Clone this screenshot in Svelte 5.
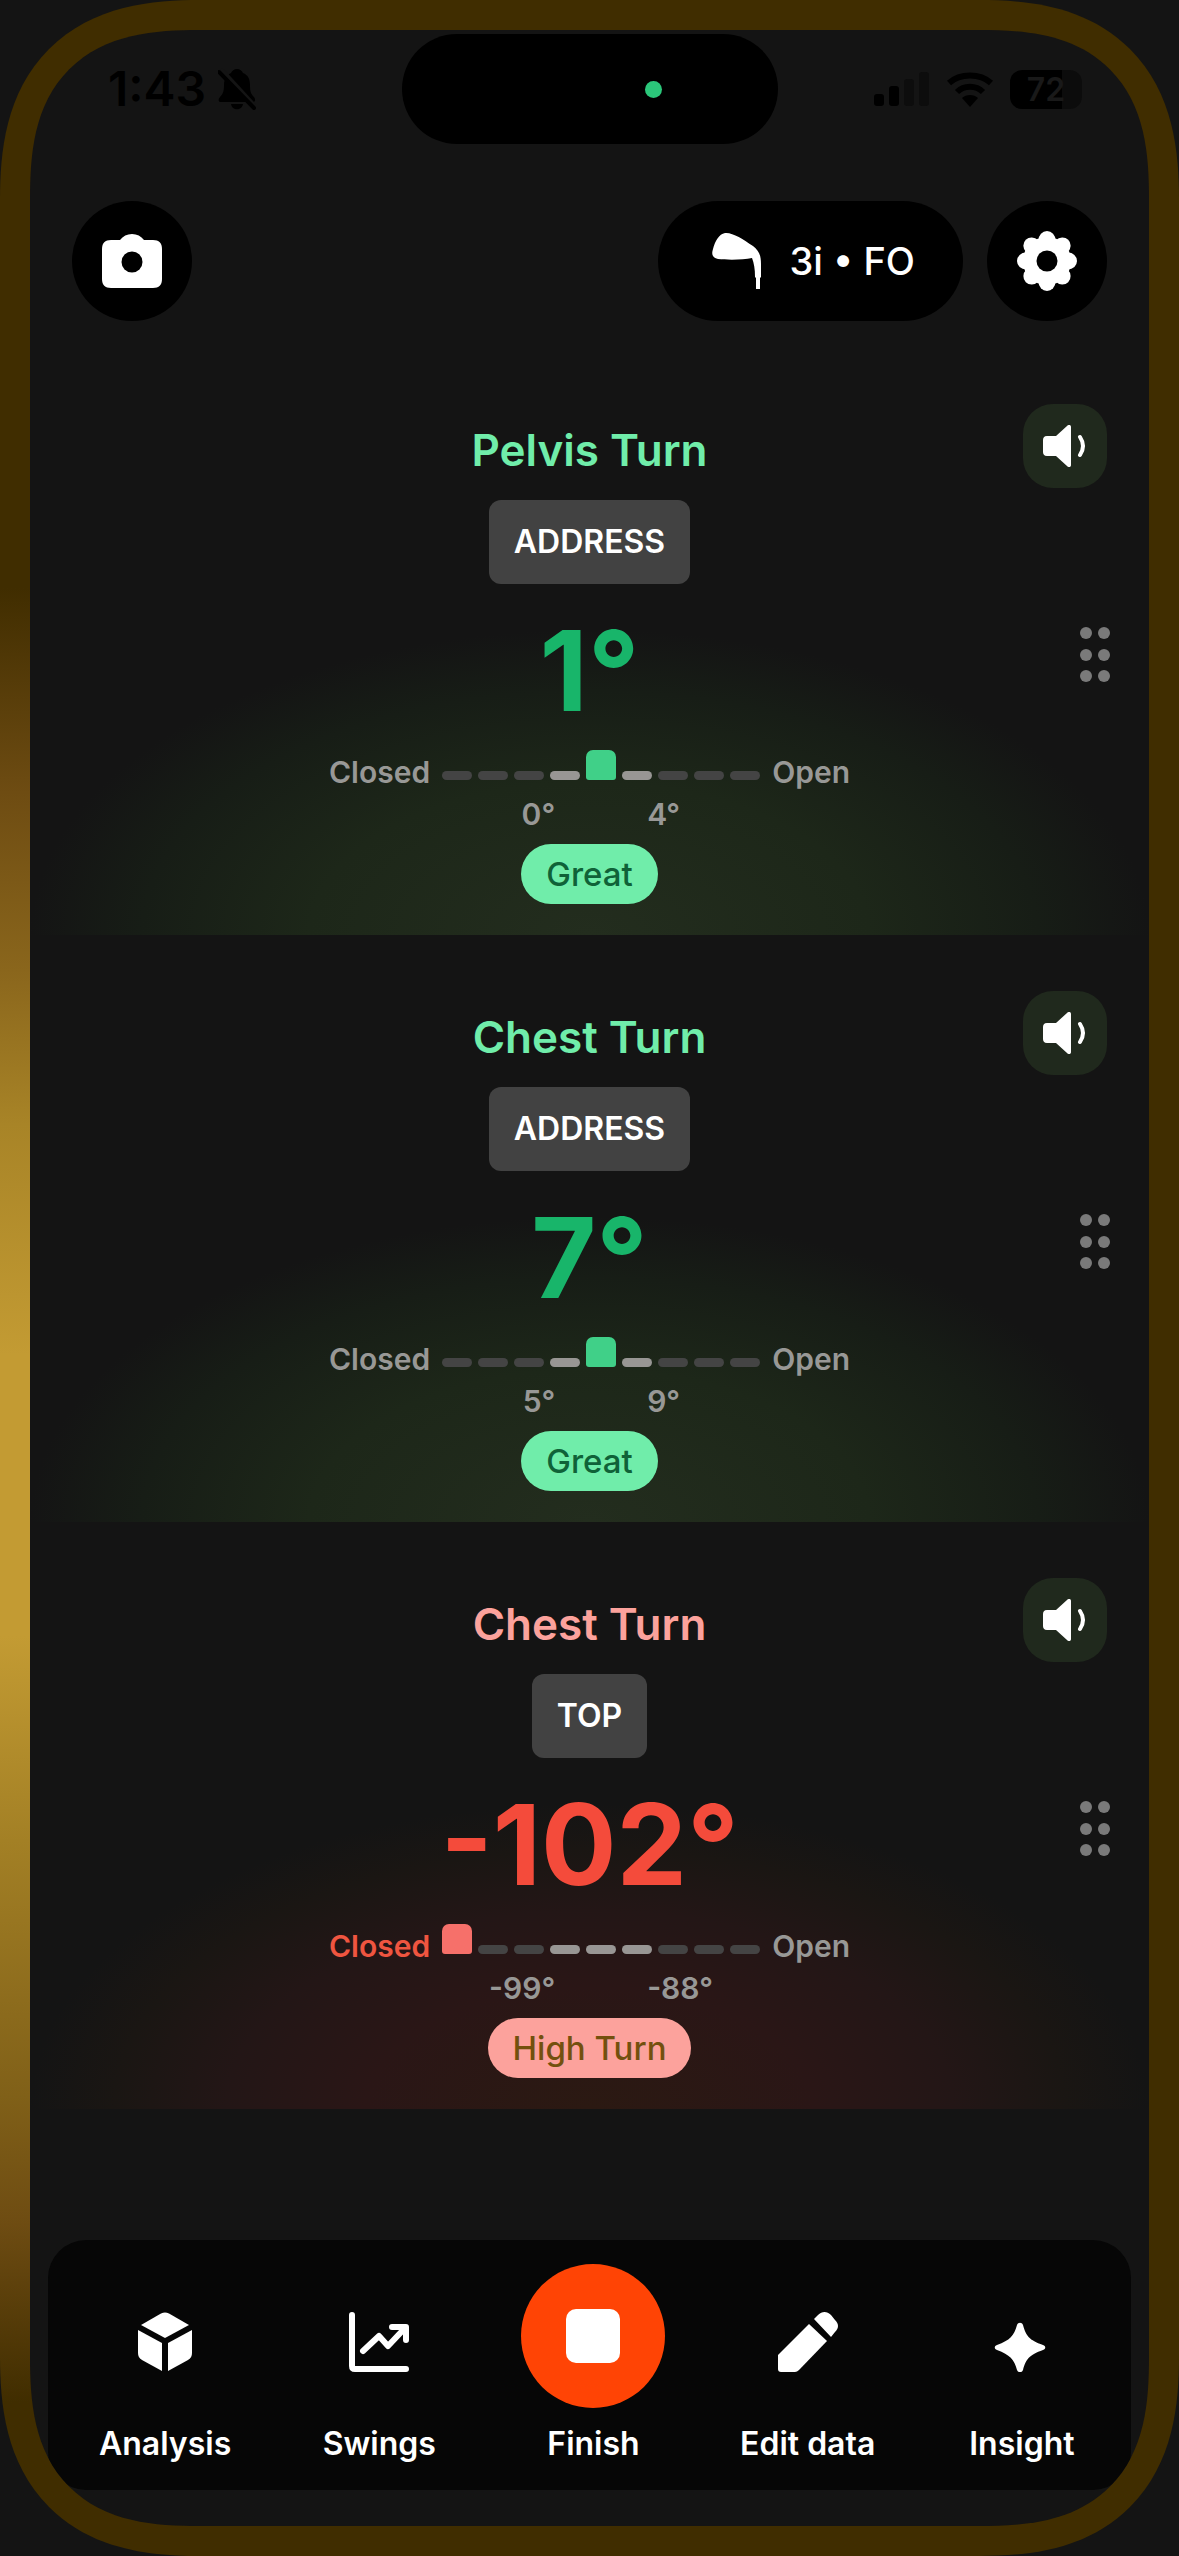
<script lang="ts">
    type Metric = {
        name: string;
        phase: string;
        value: number;
        low: number;
        high: number;
        marker: number;
        target: number[];
        verdict: string;
        tone: "good" | "bad";
    };

    const metrics: Metric[] = [
        {
            name: "Pelvis Turn",
            phase: "ADDRESS",
            value: 1,
            low: 0,
            high: 4,
            marker: 4,
            target: [3, 4, 5],
            verdict: "Great",
            tone: "good",
        },
        {
            name: "Chest Turn",
            phase: "ADDRESS",
            value: 7,
            low: 5,
            high: 9,
            marker: 4,
            target: [3, 4, 5],
            verdict: "Great",
            tone: "good",
        },
        {
            name: "Chest Turn",
            phase: "TOP",
            value: -102,
            low: -99,
            high: -88,
            marker: 0,
            target: [3, 4, 5],
            verdict: "High Turn",
            tone: "bad",
        },
    ];

    const segments = Array.from({ length: 9 }, (_, i) => i);
    const petals = segments.slice(0, 8).map((i) => i * 45);
</script>

<div class="frame">
    <div class="screen">
        <div class="status">
            <div class="status-left">
                <span class="time">1:43</span>
                <svg width="38" height="42" viewBox="0 0 38 42" aria-hidden="true">
                    <path
                        d="M19 1c3 0 5 2 6 4 5 2 7 6 7 12 0 7 1 9 4 12 2 3 1 5-1 5H3c-3 0-3-3-1-5 3-3 4-6 4-12C6 11 9 7 13 5c1-2 3-4 6-4zM13 36h12c-1 7-11 7-12 0z"
                    />
                    <path class="slash-gap" d="M3 1l34 37" />
                    <path class="slash" d="M1 4l35 36" />
                </svg>
            </div>
            <div class="island"><span class="camera-dot"></span></div>
            <div class="status-right">
                <svg width="56" height="34" viewBox="0 0 56 34" aria-hidden="true">
                    <rect y="22" width="10" height="12" rx="3" />
                    <rect x="15" y="14" width="10" height="20" rx="3" />
                    <rect class="faint" x="30" y="7" width="10" height="27" rx="3" />
                    <rect class="faint" x="45" width="10" height="34" rx="3" />
                </svg>
                <svg width="48" height="36" viewBox="0 0 48 36" aria-hidden="true">
                    <path class="wave" d="M3 12C14 2 34 2 45 12" />
                    <path class="wave" d="M11 21C18 14 30 14 37 21" />
                    <path d="M24 36l-8-9c4-4 12-4 16 0z" />
                </svg>
                <span class="battery"><span class="level">72</span></span>
            </div>
        </div>

        <header>
            <button class="round" aria-label="Camera">
                <svg width="60" height="60" viewBox="0 0 60 60">
                    <path
                        fill="#fff"
                        d="M9 9h9c3-4 7-6 12-6s9 2 12 6h9c6 0 9 3 9 9v30c0 6-3 9-9 9H9c-6 0-9-3-9-9V18c0-6 3-9 9-9z"
                    />
                    <circle cx="30" cy="31" r="10.5" fill="#000" />
                </svg>
            </button>
            <button class="club">
                <svg width="50" height="58" viewBox="0 0 50 58" aria-hidden="true">
                    <path
                        fill="#fff"
                        d="M13 1c7-1 18 6 28 13 6 5 8 9 8 18v13l-1 1v11h-4V46l-1-1c0-8-1-14-3-19-9 2-25 2-34 1-5-1-7-4-5-10C3 9 7 2 13 1z"
                    />
                </svg>
                <span>3i • FO</span>
            </button>
            <button class="round" aria-label="Settings">
                <svg width="60" height="60" viewBox="-30 -30 60 60">
                    <circle r="24" fill="#fff" />
                    {#each petals as angle}
                        <ellipse
                            cy="-21"
                            rx="8.5"
                            ry="9"
                            fill="#fff"
                            transform="rotate({angle})"
                        />
                    {/each}
                    <circle r="10.5" fill="#000" />
                </svg>
            </button>
        </header>

        <main>
            {#each metrics as metric}
                <section class={["card", metric.tone]}>
                    <div class="body">
                        <h2>{metric.name}</h2>
                        <span class="phase">{metric.phase}</span>
                        <strong class="value">{metric.value}°</strong>
                        <div class="range">
                            <span class={{ hit: metric.marker === 0 }}>Closed</span>
                            <div class="track">
                                {#each segments as i}
                                    <i
                                        class={{
                                            target: metric.target.includes(i),
                                            marker: metric.marker === i,
                                        }}
                                    ></i>
                                {/each}
                            </div>
                            <span>Open</span>
                            <div class="limits">
                                <span>{metric.low}°</span>
                                <span>{metric.high}°</span>
                            </div>
                        </div>
                        <span class="verdict">{metric.verdict}</span>
                    </div>
                    <div class="tools">
                        <button class="sound" aria-label="Play {metric.name}">
                            <svg width="44" height="42" viewBox="0 0 44 42">
                                <path
                                    fill="#fff"
                                    d="M4 11h9L24 1c2-2 4-1 4 1v38c0 2-2 3-4 1L13 31H4c-3 0-4-2-4-4V15c0-2 1-4 4-4z"
                                />
                                <path
                                    fill="none"
                                    stroke="#fff"
                                    stroke-width="4"
                                    stroke-linecap="round"
                                    d="M37 12c4 6 4 12 0 18"
                                />
                            </svg>
                        </button>
                        <button class="handle" aria-label="Reorder {metric.name}">
                            <svg width="30" height="56" viewBox="0 0 30 56">
                                {#each [6, 28, 49] as y}
                                    <circle cx="6" cy={y} r="6" />
                                    <circle cx="24" cy={y} r="6" />
                                {/each}
                            </svg>
                        </button>
                    </div>
                </section>
            {/each}
        </main>

        <nav>
            <button>
                <span class="icon">
                    <svg width="60" height="60" viewBox="0 0 60 60" fill="#fff">
                        <path d="M26 1.500c3-1.500 5-1.500 8 0L54 13 30 26 6 13z" />
                        <path d="M3 18l24 13v28L7 48c-3-2-4-4-4-7z" />
                        <path d="M57 18L33 31v28l20-11c3-2 4-4 4-7z" />
                    </svg>
                </span>
                Analysis
            </button>
            <button>
                <span class="icon">
                    <svg class="line" width="60" height="60" viewBox="0 0 60 60">
                        <path d="M3 3v51q0 3 3 3h51" />
                        <path d="M14 39l16-15 9 10 17-18M43 15h14v13" />
                    </svg>
                </span>
                Swings
            </button>
            <button>
                <span class="icon stop"><i></i></span>
                Finish
            </button>
            <button>
                <span class="icon">
                    <svg width="60" height="60" viewBox="0 0 60 60" fill="#fff">
                        <path d="M31 12l18 17-28 29q-2 2-4 2H3q-3 0-3-3V43z" />
                        <path d="M36 7l4-4c4-4 9-4 13 0l4 5c4 4 4 8 0 12l-4 5z" />
                    </svg>
                </span>
                Edit data
            </button>
            <button>
                <span class="icon">
                    <svg width="60" height="60" viewBox="0 0 60 60" fill="#fff">
                        <path
                            d="M25 13c1-3 5-3 6 0 3 11 6 15 20 20 3 1 3 4 0 5-14 5-17 9-20 20-1 3-5 3-6 0-3-11-7-15-20-20-3-1-3-4 0-5 13-5 17-9 20-20z"
                        />
                    </svg>
                </span>
                Insight
            </button>
        </nav>
    </div>
</div>

<style>
    :global(body) {
        background: #141414;
    }

    .frame {
        box-sizing: border-box;
        display: flex;
        min-height: 100vh;
        padding: 30px;
        border-radius: 165px;
        background:
            linear-gradient(
                    #402d00 23%,
                    #6e4c12 31%,
                    #8a661c 38%,
                    #a88427 44%,
                    #c39b33 53%,
                    #c39b33 64%,
                    #a38025 72%,
                    #806018 82%,
                    #6e4c12 87%,
                    #402d00 94%
                )
                left / 30px 100% no-repeat,
            #402d00;
        font-family: Inter, "Liberation Sans", sans-serif;
        color: #fff;
    }

    .screen {
        flex: 1;
        display: flex;
        flex-direction: column;
        min-width: 0;
        overflow: hidden;
        border-radius: 135px;
        background: #141414;
    }

    /* continuous corners where the browser can draw them */
    @supports (corner-shape: superellipse(1.3)) {
        .frame {
            border-radius: 200px;
            corner-shape: superellipse(1.3);
        }

        .screen {
            border-radius: 170px;
            corner-shape: superellipse(1.4);
        }
    }

    button {
        border: 0;
        padding: 0;
        background: none;
        color: inherit;
        font: inherit;
        cursor: pointer;
    }

    svg {
        display: block;
        flex: none;
    }

    .status {
        display: grid;
        grid-template-columns: 1fr 376px 1fr;
        align-items: center;
        margin-top: 4px;
        color: #000;
    }

    .status-left {
        display: flex;
        align-items: center;
        gap: 12px;
        padding-left: 78px;
    }

    .time {
        font-size: 48px;
        font-weight: 600;
        line-height: 60px;
    }

    .slash-gap {
        stroke: #141414;
        stroke-width: 4;
    }

    .slash {
        stroke: #000;
        stroke-width: 4;
        stroke-linecap: round;
    }

    .island {
        box-sizing: border-box;
        display: flex;
        align-items: center;
        justify-content: flex-end;
        height: 110px;
        padding-right: 116px;
        border-radius: 55px;
        background: #000;
    }

    .camera-dot {
        width: 17px;
        height: 17px;
        border-radius: 50%;
        background: #2bc77a;
    }

    .status-right {
        display: flex;
        align-items: center;
        justify-content: flex-end;
        gap: 16px;
        padding-right: 67px;
    }

    .faint {
        fill: #0d0d0d;
    }

    .wave {
        fill: none;
        stroke: #000;
        stroke-width: 6;
    }

    .battery {
        box-sizing: border-box;
        width: 72px;
        height: 39px;
        border-radius: 12px;
        background: linear-gradient(90deg, #000 72%, #0c0c0c 72%);
    }

    .level {
        display: block;
        text-align: center;
        font-size: 32px;
        font-weight: 600;
        line-height: 39px;
        color: #191919;
    }

    header {
        display: flex;
        gap: 24px;
        padding: 57px 42px 27px;
    }

    .round,
    .club {
        display: flex;
        align-items: center;
        justify-content: center;
        height: 120px;
        border-radius: 60px;
        background: #000;
    }

    .round {
        width: 120px;
    }

    .club {
        gap: 28px;
        margin-left: auto;
        padding: 0 48px 0 54px;
        font-size: 38px;
        font-weight: 500;
    }

    .card {
        display: grid;
        grid-template-columns: 1fr auto 1fr;
        background: radial-gradient(ellipse 50% 52% at 50% 100%, var(--glow));
    }

    .good {
        --glow: #232d1e, #1d2719 50%, #171d16 80%, #141414;
        --title: #70edaa;
        --value: #18b56a;
        --marker: #40d088;
        --pill: #70edaa;
        --pill-text: #0f6238;
    }

    .bad {
        --glow: #2b1912, #2a1616 40%, #231616 65%, #1a1613 85%, #141414;
        --title: #fca29c;
        --value: #f44b3b;
        --marker: #f6706a;
        --pill: #fca29c;
        --pill-text: #73500e;
    }

    .body {
        grid-column: 2;
        display: flex;
        flex-direction: column;
        align-items: center;
        padding: 72px 0 31px;
    }

    h2 {
        margin: 0;
        font-size: 44px;
        font-weight: 600;
        line-height: 60px;
        color: var(--title);
    }

    .phase {
        margin-top: 20px;
        padding: 0 25px;
        border-radius: 12px;
        background: #424242;
        font-size: 32px;
        font-weight: 600;
        line-height: 84px;
    }

    .value {
        margin-top: 36px;
        font-size: 112px;
        font-weight: 700;
        line-height: 100px;
        color: var(--value);
    }

    .range {
        display: grid;
        grid-template-columns: auto 318px auto;
        align-items: end;
        column-gap: 12px;
        row-gap: 6px;
        margin-top: 30px;
        font-size: 30px;
        font-weight: 600;
        line-height: 36px;
        color: #989896;
    }

    .hit {
        color: #ef5540;
    }

    .track {
        display: flex;
        align-items: flex-end;
        gap: 6px;
        height: 30px;
        padding-bottom: 10px;
    }

    .track i {
        flex: 1;
        height: 9px;
        border-radius: 5px;
        background: #444;
    }

    .track .target {
        background: #989694;
    }

    .track .marker {
        height: 30px;
        border-radius: 7px 7px 3px 3px;
        background: var(--marker);
    }

    .limits {
        grid-column: 2;
        display: grid;
        grid-template-columns: 1fr 1fr;
        column-gap: 92px;
    }

    .limits span:first-child {
        text-align: right;
    }

    .verdict {
        margin-top: 12px;
        padding: 0 25px;
        border-radius: 30px;
        background: var(--pill);
        font-size: 33px;
        font-weight: 500;
        line-height: 60px;
        color: var(--pill-text);
    }

    .tools {
        display: flex;
        flex-direction: column;
        align-items: flex-end;
        gap: 139px;
        padding: 56px 39px 0 0;
    }

    .sound {
        display: flex;
        align-items: center;
        justify-content: center;
        width: 84px;
        height: 84px;
        margin-right: 3px;
        border-radius: 30px;
        background: #20291d;
    }

    .handle svg {
        fill: #7a7a7a;
    }

    nav {
        display: grid;
        grid-template-columns: repeat(5, 1fr);
        margin: auto 18px 36px;
        padding: 24px 2px 24px 10px;
        border-radius: 38px;
        background: #060606;
    }

    nav button {
        display: flex;
        flex-direction: column;
        align-items: center;
        gap: 14px;
        font-size: 32px;
        font-weight: 600;
        line-height: 44px;
    }

    .icon {
        box-sizing: border-box;
        display: flex;
        align-items: center;
        justify-content: center;
        width: 144px;
        height: 144px;
        padding-top: 12px;
    }

    .stop {
        padding-top: 0;
        border-radius: 50%;
        background: #ff4405;
    }

    .stop i {
        width: 54px;
        height: 54px;
        border-radius: 10px;
        background: #fff;
    }

    .line {
        fill: none;
        stroke: #fff;
        stroke-width: 6;
        stroke-linecap: round;
        stroke-linejoin: round;
    }
</style>
